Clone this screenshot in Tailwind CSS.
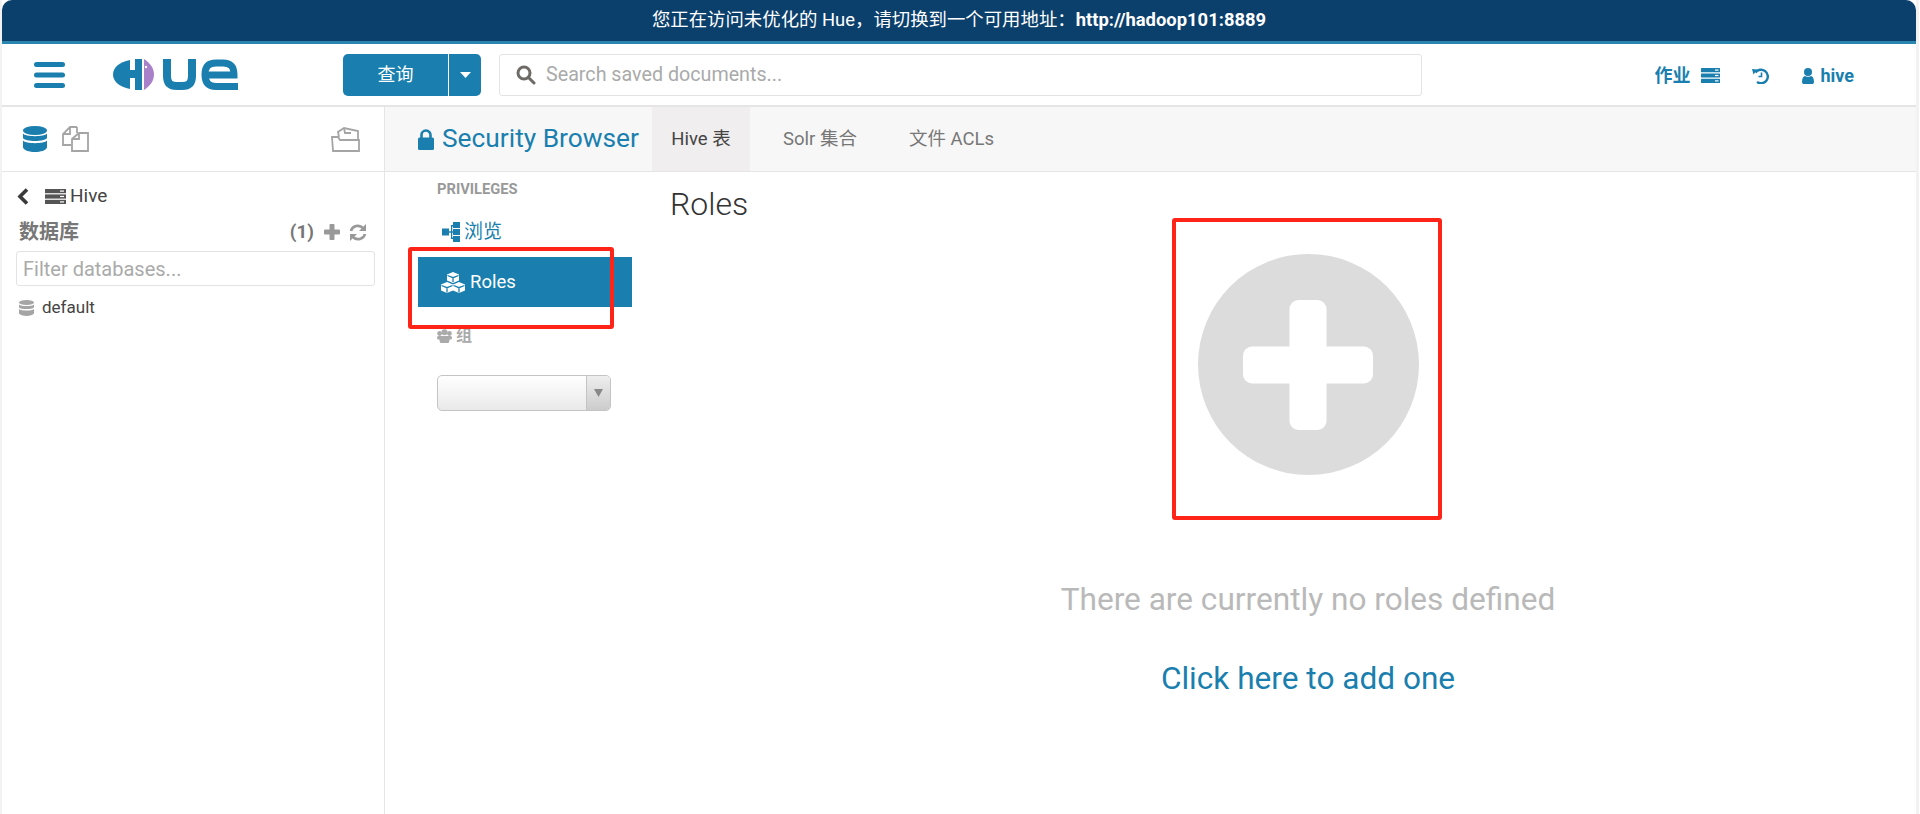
<!DOCTYPE html>
<html lang="zh-CN">
<head>
<meta charset="UTF-8">
<meta name="viewport" content="width=device-width, initial-scale=1.0">
<title>Hue - Security Browser</title>
<script src="https://cdn.jsdelivr.net/npm/@tailwindcss/browser@4"></script>
</head>
<body class="bg-white font-['Roboto','Noto_Sans_CJK_SC',sans-serif] text-[#444] overflow-hidden">
<div class="h-[814px] w-[1919px] border-l-2 border-r-[3px] border-[#f2f2f2] bg-white flex flex-col relative">

  <!-- top banner -->
  <div class="h-[44px] shrink-0 bg-[#0b406d] border-b-[3px] border-[#2a86ae] rounded-t-[10px] flex items-center justify-center pb-[2px] text-white text-[18.4px]">
    <span>您正在访问未优化的 Hue，请切换到一个可用地址：<b class="font-bold">http://hadoop101:8889</b></span>
  </div>

  <!-- navbar -->
  <div class="h-[63px] shrink-0 border-b-2 border-[#e5e5e5] flex items-center pl-[32px] pr-[62px]">
    <svg class="w-[31px] h-[26px] shrink-0" viewBox="0 0 31 26" fill="#1a7fae"><rect width="31" height="5" rx="2.5"/><rect y="10.500" width="31" height="5" rx="2.500"/><rect y="21" width="31" height="5" rx="2.500"/></svg>
    <svg class="w-[127px] h-[32px] ml-[48px] shrink-0" viewBox="0 0 127 32">
      <path d="M17 1C6 3 0 9 0 15.500C0 22 6 28 17 30Z" fill="#1a7fae"/>
      <rect x="17" y="11" width="5" height="8" fill="#1a7fae"/>
      <rect x="22" y="0" width="7" height="31" fill="#1a7fae"/>
      <path d="M31 0C37 4 41 9 41 15.500C41 22 37 27 31 31Z" fill="#a981cb"/>
      <circle cx="33" cy="8" r="1.200" fill="#fff"/>
      <path d="M54 0V17C54 25 58 27 64 27H69C75 27 79 25 79 17V0" fill="none" stroke="#1a7fae" stroke-width="8"/>
      <path d="M125 27.500H103C95 27.500 92 23 92 15.500C92 8 95 4 103 4H110C118 4 121 8 121 16H92" fill="none" stroke="#1a7fae" stroke-width="7"/>
    </svg>
    <button class="ml-[103px] h-[42px] w-[105px] shrink-0 bg-[#1a7fae] text-white text-[18px] rounded-l-[5px]">查询</button>
    <button class="h-[42px] w-[32px] shrink-0 ml-px bg-[#1a7fae] rounded-r-[5px] flex items-center justify-center">
      <svg class="w-[11px] h-[6px]" viewBox="0 0 11 6" fill="#fff"><path d="M0 0H11L5.500 6Z"/></svg>
    </button>
    <div class="ml-[18px] h-[42px] w-[923px] shrink-0 border border-[#e3e3e3] rounded-[3px] flex items-center pl-[16px]">
      <svg class="w-[20px] h-[20px] shrink-0" viewBox="0 0 20 20" fill="none" stroke="#6e6a66" stroke-width="3"><circle cx="8" cy="8" r="6"/><path d="M12.500 12.500L18 18" stroke-linecap="round"/></svg>
      <span class="ml-[10px] text-[19.7px] text-[#aaa]">Search saved documents...</span>
    </div>
    <div class="ml-auto flex items-center pt-[2px] text-[#1a7fae] font-bold text-[18px]">
      <span>作业</span>
      <svg class="w-[19px] h-[15px] ml-[11px]" viewBox="0 0 19 15" fill="#1a7fae"><rect width="19" height="4.200" rx=".5"/><rect y="5.400" width="19" height="4.200" rx=".5"/><rect y="10.800" width="19" height="4.200" rx=".5"/><rect x="14" y="1.500" width="3.500" height="1.200" fill="#fff"/><rect x="14" y="6.900" width="3.500" height="1.200" fill="#fff"/><rect x="14" y="12.300" width="3.500" height="1.200" fill="#fff"/></svg>
      <svg class="w-[17px] h-[16px] ml-[32px]" viewBox="0 0 17 16" fill="none" stroke="#1a7fae" stroke-width="2.400"><path d="M3.500 4.500A6.800 6.800 0 1 1 5 14"/><path d="M0 1L5.500 1.500L1.500 6.500Z" fill="#1a7fae" stroke="none"/><path d="M9.500 4.500V8.500H6.500" stroke-width="1.600"/></svg>
      <svg class="w-[12px] h-[16px] ml-[33px]" viewBox="0 0 12 16" fill="#1a7fae"><circle cx="6" cy="4" r="4"/><path d="M0 14C0 10 1.500 8 3 8C4 9 8 9 9 8C10.500 8 12 10 12 14C12 15.500 11 16 10 16H2C1 16 0 15.500 0 14Z"/></svg>
      <span class="ml-[6px]">hive</span>
    </div>
  </div>

  <!-- main area -->
  <div class="flex-1 flex min-h-0">

    <!-- left assist panel -->
    <div class="w-[383px] shrink-0 border-r border-[#e5e5e5]">
      <div class="h-[65px] border-b border-[#e5e5e5] flex items-center pl-[21px] pr-[24px]">
        <svg class="w-[24px] h-[26px]" viewBox="0 0 24 26" fill="#1a7fae"><ellipse cx="12" cy="4.500" rx="12" ry="4.500"/><path d="M0 7.500C2 11 22 11 24 7.500V12C22 16 2 16 0 12Z"/><path d="M0 14.500C2 18 22 18 24 14.500V21.500C22 27.500 2 27.500 0 21.500Z"/></svg>
        <svg class="w-[27px] h-[26px] ml-[15px]" viewBox="0 0 27 26" fill="none" stroke="#a5a5a5" stroke-width="1.800"><path d="M15 1H8L1 8V19H9M1 8H8V1"/><path d="M15 1V7"/><path d="M26 7H17L10 13V25H26ZM10 13H17V7"/></svg>
        <svg class="w-[29px] h-[25px] ml-auto" viewBox="0 0 29 25" fill="none" stroke="#a5a5a5" stroke-width="1.800"><path d="M2 24L1 10H7L9 13H28V24Z"/><path d="M8 10L7 5L13 1L27 4V13"/><path d="M13 1L14 6L20 6"/></svg>
      </div>
      <div class="pl-[14px] pr-[9px]">
        <div class="flex items-center h-[18px] mt-[15px] pl-[1px] text-[19px]">
          <svg class="w-[12px] h-[17px]" viewBox="0 0 12 17" fill="none" stroke="#3a3a3a" stroke-width="3.600"><path d="M10 1.500L3 8.500L10 15.500"/></svg>
          <svg class="w-[21px] h-[15px] ml-[16px]" viewBox="0 0 21 15" fill="#555"><rect width="21" height="4.200"/><rect y="5.400" width="21" height="4.200"/><rect y="10.800" width="21" height="4.200"/><rect x="15" y="1.500" width="4" height="1.200" fill="#fff"/><rect x="15" y="6.900" width="4" height="1.200" fill="#fff"/><rect x="15" y="12.300" width="4" height="1.200" fill="#fff"/></svg>
          <span class="ml-[4px]">Hive</span>
        </div>
        <div class="flex items-center h-[24px] mt-[15px] pl-[3px] pr-[8px] text-[#777]">
          <span class="text-[20px] font-bold">数据库</span>
          <span class="ml-auto text-[19px] font-bold">(1)</span>
          <svg class="w-[16px] h-[16px] ml-[10px]" viewBox="0 0 16 16" fill="#999"><rect x="5.500" width="5" height="16" rx="1"/><rect y="5.500" width="16" height="5" rx="1"/></svg>
          <svg class="w-[18px] h-[17px] ml-[9px]" viewBox="0 0 18 17" fill="none" stroke="#999" stroke-width="2.600"><path d="M2 7A7 6.500 0 0 1 14 4"/><path d="M16 10A7 6.500 0 0 1 4 13"/><path d="M17 0V7H10Z" fill="#999" stroke="none"/><path d="M1 17V10H8Z" fill="#999" stroke="none"/></svg>
        </div>
        <div class="h-[35px] mt-[7px] border border-[#e3e3e3] rounded-[3px] flex items-center pl-[6px] text-[20px] text-[#aaa]">Filter databases...</div>
        <div class="flex items-center h-[16px] mt-[14px] pl-[3px] text-[17px]">
          <svg class="w-[15px] h-[16px]" viewBox="0 0 15 16" fill="#a5a5a5"><ellipse cx="7.500" cy="2.500" rx="7.500" ry="2.500"/><path d="M0 4.500C2 6.500 13 6.500 15 4.500V7.500C13 9.500 2 9.500 0 7.500Z"/><path d="M0 9C2 11 13 11 15 9V13.500C13 16.800 2 16.800 0 13.500Z"/></svg>
          <span class="ml-[8px]">default</span>
        </div>
      </div>
    </div>

    <!-- right side -->
    <div class="flex-1 min-w-0 flex flex-col">
      <div class="h-[65px] shrink-0 bg-[#f7f7f7] border-b border-[#e5e5e5] flex pl-[33px]">
        <div class="flex items-center w-[234px] shrink-0">
          <svg class="w-[16px] h-[21px]" viewBox="0 0 16 21" fill="#1a7fae"><path d="M3.500 9V6A4.500 4.500 0 0 1 12.500 6V9" fill="none" stroke="#1a7fae" stroke-width="2.600"/><rect y="8.500" width="16" height="12.500" rx="1.500"/></svg>
          <span class="ml-[8px] text-[26.3px] text-[#1a7fae] whitespace-nowrap">Security Browser</span>
        </div>
        <div class="w-[98px] h-[64px] pt-[2px] bg-[#f0eeee] flex items-center justify-center text-[18.5px] text-[#444]">Hive 表</div>
        <div class="ml-[33px] pt-[2px] flex items-center text-[18.5px] text-[#777]">Solr 集合</div>
        <div class="ml-[52px] pt-[2px] flex items-center text-[18.5px] text-[#777]">文件 ACLs</div>
      </div>

      <div class="flex-1 flex min-h-0">
        <!-- sub menu -->
        <div class="w-[248px] shrink-0 pl-[33px] pr-px">
          <div class="mt-[10px] h-[14px] pl-[19px] flex items-center text-[14.7px] font-bold text-[#999]">PRIVILEGES</div>
          <div class="h-[24px] mt-[24px] pl-[24px] flex items-center text-[19px] text-[#1a7fae]">
            <svg class="w-[18px] h-[20px]" viewBox="0 0 18 20" fill="#1a7fae"><rect y="6.500" width="7" height="7"/><rect x="11" width="7" height="6"/><rect x="11" y="7" width="7" height="6"/><rect x="11" y="14" width="7" height="6"/><path d="M6 9.200H9V3H11V4.500H10.200V9.200H11V10.800H10.200V15.500H11V17H9V10.800H6Z"/></svg>
            <span class="ml-[4px]">浏览</span>
          </div>
          <div class="h-[50px] mt-[13px] bg-[#1a7fae] pl-[23px] flex items-center text-[18.5px] text-white">
            <svg class="w-[24px] h-[21px]" viewBox="0 0 24 21"><path d="M12 0L18 2.500V8.500L12 11L6 8.500V2.500Z" fill="#fff"/><path d="M6 10L12 12.500V18.500L6 21L0 18.500V12.500Z" fill="#fff"/><path d="M18 10L24 12.500V18.500L18 21L12 18.500V12.500Z" fill="#fff"/><path d="M6.500 3.500L12 5.700L17.500 3.500M12 5.700V10M.5 13.500L6 15.700L11.500 13.500M6 15.700V20.500M12.500 13.500L18 15.700L23.500 13.500M18 15.700V20.500" fill="none" stroke="#1a7fae" stroke-width="1.300"/></svg>
            <span class="ml-[5px] pt-[2px]">Roles</span>
          </div>
          <div class="h-[16px] mt-[21px] pl-[19px] flex items-center text-[16px] font-bold text-[#aaa]">
            <svg class="w-[15px] h-[14px]" viewBox="0 0 15 14" fill="#aaa"><circle cx="7.500" cy="3.200" r="3"/><circle cx="2.600" cy="4.500" r="2.400"/><circle cx="12.400" cy="4.500" r="2.400"/><path d="M3.500 7H11.500C13 7 13 14 11 14H4C2 14 2 7 3.500 7Z"/><rect y="7" width="15" height="3.500" rx="1.500"/></svg>
            <span class="ml-[4px]">组</span>
          </div>
          <div class="ml-[19px] mt-[31px] w-[174px] h-[36px] border border-[#c4c4c4] rounded-[5px] bg-linear-to-b from-white to-[#e9e9e9] flex justify-end overflow-hidden">
            <div class="w-[24px] border-l border-[#c4c4c4] bg-linear-to-b from-[#eee] to-[#ccc] flex items-center justify-center">
              <svg class="w-[9px] h-[8px]" viewBox="0 0 9 8" fill="#888"><path d="M0 0H9L4.500 8Z"/></svg>
            </div>
          </div>
        </div>

        <!-- content -->
        <div class="flex-1 min-w-0 pl-[37px]">
          <h1 class="mt-[14px] h-[36px] leading-[36px] text-[32px] font-light text-[#333]">Roles</h1>
          <div class="pl-[30px] flex flex-col items-center">
            <div class="relative w-[221px] h-[221px] mt-[32px] rounded-full bg-[#dcdcdc] flex items-center justify-center">
              <svg class="w-[130px] h-[130px]" viewBox="0 0 130 130" fill="#fff"><rect x="46.500" width="37" height="130" rx="9"/><rect y="46.500" width="130" height="37" rx="9"/></svg>
              <div class="absolute left-[-26px] top-[-36px] w-[270px] h-[302px] border-[4px] border-[#ff2417] rounded-[3px]"></div>
            </div>
            <p class="mt-[105px] text-[31.6px] leading-[40px] text-[#b9b9b9] whitespace-nowrap">There are currently no roles defined</p>
            <p class="mt-[39px] text-[31.6px] leading-[40px] text-[#1a7fae] whitespace-nowrap">Click here to add one</p>
          </div>
        </div>
      </div>
    </div>
  </div>

  <!-- red annotation over the Roles item -->
  <div class="absolute left-[406px] top-[247px] w-[206px] h-[82px] border-[4px] border-[#ff2417] rounded-[3px]"></div>
</div>
</body>
</html>
